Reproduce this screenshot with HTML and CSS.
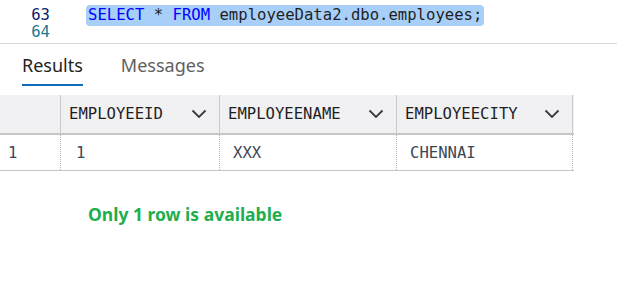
FILE: index.html
```html
<!DOCTYPE html>
<html>
<head>
<meta charset="utf-8">
<link rel="stylesheet" href="styles.css">
</head>
<body>
<div class="editor">
  <div class="line">
    <span class="ln current">63</span>
    <span class="code"><span class="sel"><span class="kw">SELECT</span> * <span class="kw">FROM</span> employeeData2.dbo.employees;</span></span>
  </div>
  <div class="line">
    <span class="ln">64</span>
    <span class="code"></span>
  </div>
</div>
<div class="tabs">
  <div class="tab active">Results</div>
  <div class="tab">Messages</div>
</div>
<div class="grid">
  <div class="row head">
    <div class="cell num"></div>
    <div class="cell c1"><span>EMPLOYEEID</span><svg class="chev" viewBox="0 0 16 10" width="16" height="10"><path d="M1.5 1.5 L8 8 L14.5 1.5" fill="none" stroke="#3a3a3a" stroke-width="1.8"/></svg></div>
    <div class="cell c2"><span>EMPLOYEENAME</span><svg class="chev" viewBox="0 0 16 10" width="16" height="10"><path d="M1.5 1.5 L8 8 L14.5 1.5" fill="none" stroke="#3a3a3a" stroke-width="1.8"/></svg></div>
    <div class="cell c3"><span>EMPLOYEECITY</span><svg class="chev" viewBox="0 0 16 10" width="16" height="10"><path d="M1.5 1.5 L8 8 L14.5 1.5" fill="none" stroke="#3a3a3a" stroke-width="1.8"/></svg></div>
  </div>
  <div class="row body">
    <div class="cell num">1</div>
    <div class="cell c1">1</div>
    <div class="cell c2">XXX</div>
    <div class="cell c3">CHENNAI</div>
  </div>
</div>
<div class="note">Only 1 row is available</div>
</body>
</html>
```

FILE: styles.css
```css
html, body {
  margin: 0;
  padding: 0;
  background: #ffffff;
}
body {
  width: 617px;
  height: 299px;
  overflow: hidden;
  font-family: "DejaVu Sans Mono", monospace;
}
.editor {
  height: 39px;
  padding-top: 4px;
  border-bottom: 1px solid #d6d6d6;
}
.line {
  display: flex;
  height: 22px;
  align-items: center;
  font-size: 15.6px;
}
.line + .line {
  height: 13px;
  align-items: flex-end;
  line-height: 13px;
}
.ln {
  width: 50px;
  text-align: right;
  color: #237893;
}
.ln.current {
  color: #0b216f;
}
.code {
  margin-left: 36px;
  color: #1f1f1f;
  white-space: pre;
}
.sel {
  display: inline-block;
  background: #a8cff7;
  border-radius: 4px;
  padding: 0 2px;
  line-height: 21px;
}
.kw {
  color: #0000ff;
}
.tabs {
  display: flex;
  height: 51px;
  padding-left: 22px;
  gap: 38px;
  font-family: "Noto Sans", sans-serif;
  font-size: 18px;
}
.tab {
  color: #616161;
  padding-top: 9px;
  height: 32px;
  box-sizing: content-box;
}
.tab.active {
  color: #1f1f1f;
  border-bottom: 2px solid #0f6cbd;
  height: 31px;
}
.grid {
  width: 574px;
}
.row {
  display: flex;
}
.row.head {
  height: 38px;
  background: #f1f1f3;
  border-bottom: 2px solid #c6c6c6;
  align-items: stretch;
}
.row.body {
  height: 35px;
  border-bottom: 1px solid #c6c6c6;
}
.cell {
  box-sizing: border-box;
  display: flex;
  align-items: center;
  font-size: 15.6px;
  color: #1f1f1f;
}
.row.head .cell {
  border-left: 1px solid #c9c9c9;
  padding-left: 8px;
  padding-right: 12px;
  justify-content: space-between;
}
.row.head .cell.num {
  border-left: none;
}
.row.head .c3 {
  border-right: 1px solid #c9c9c9;
}
.row.body .cell {
  border-left: 1px dotted #b5b5b5;
  color: #3b4656;
}
.row.body .cell.num {
  border-left: none;
  padding-left: 8px;
}
.row.body .c1 { padding-left: 15px; }
.row.body .c2 { padding-left: 13px; }
.row.body .c3 { padding-left: 13px; border-right: 1px dotted #b5b5b5; }
.num { width: 60px; }
.c1 { width: 159px; }
.c2 { width: 177px; }
.c3 { width: 177px; }
.note {
  margin-top: 31px;
  padding-left: 88px;
  font-family: "Noto Sans", sans-serif;
  font-weight: bold;
  font-size: 17.5px;
  color: #1fae4d;
}
```
